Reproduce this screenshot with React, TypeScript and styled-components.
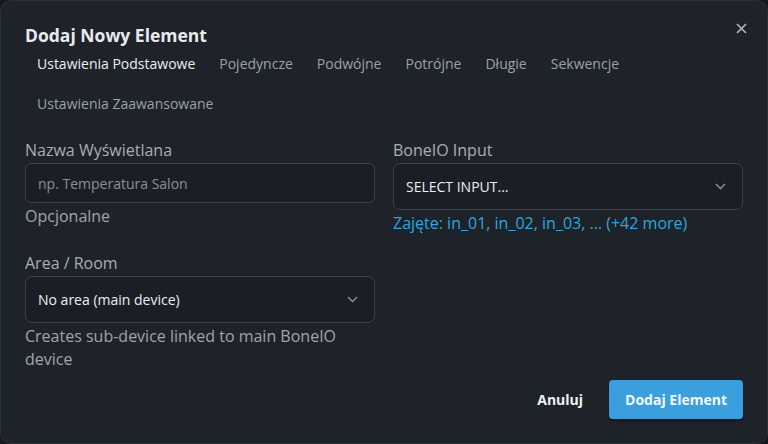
import { FC } from 'react';
import styled, { createGlobalStyle } from 'styled-components';

const GlobalStyle = createGlobalStyle`
  html, body {
    margin: 0;
    padding: 0;
    background: #15181c;
  }
  body {
    font-family: "Open Sans", "Noto Sans", sans-serif;
  }
  * {
    box-sizing: border-box;
  }
`

const Dialog = styled.div`
  width: 768px;
  height: 444px;
  background: #1e232a;
  border-radius: 12px;
  box-shadow: inset 0 0 0 1px #2a3038;
  padding: 20px 25px 25px;
  display: flex;
  flex-direction: column;
  overflow: hidden;
`
const Header = styled.div`
  display: flex;
  justify-content: space-between;
  align-items: flex-start;
`
const Title = styled.h2`
  margin: 3px 0 0;
  font-size: 17.5px;
  font-weight: 700;
  color: #e8eaed;
  line-height: 24px;
`
const CloseButton = styled.button`
  background: none;
  border: none;
  padding: 0;
  margin: -2px -8px 0 0;
  width: 20px;
  height: 20px;
  display: flex;
  align-items: center;
  justify-content: center;
  color: #b4b8bd;
  cursor: pointer;
`
const Tabs = styled.div`
  display: flex;
  flex-wrap: wrap;
  margin-top: -4px;
`
const Tab = styled.div<{ $active?: boolean }>`
  height: 40px;
  padding: 0 12px;
  display: flex;
  align-items: center;
  font-size: 14px;
  color: ${p => (p.$active ? '#eceef0' : '#9ba1a8')};
  white-space: nowrap;
`
const FormGrid = styled.div`
  display: grid;
  grid-template-columns: 1fr 1fr;
  column-gap: 18px;
  margin-top: 16px;
`
const Column = styled.div`
  display: flex;
  flex-direction: column;
  gap: 24px;
`
const Field = styled.div`
  display: flex;
  flex-direction: column;
`
const Label = styled.label`
  font-size: 16px;
  color: #a9aeb3;
  line-height: 22px;
  margin-bottom: 2px;
`
const Input = styled.input`
  height: 40px;
  width: 100%;
  background: #1b1f25;
  border: 1px solid #3b4149;
  border-radius: 6px;
  padding: 0 12px;
  font-family: inherit;
  font-size: 14px;
  color: #e8eaed;
  outline: none;
  &::placeholder {
    color: #8b9096;
  }
`
const Select = styled.div`
  height: 47px;
  background: #1b1f25;
  border: 1px solid #3b4149;
  border-radius: 7px;
  padding: 0 16px 0 12px;
  display: flex;
  align-items: center;
  justify-content: space-between;
  font-size: 14px;
  color: #eceef0;
`
const Hint = styled.div<{ $accent?: boolean }>`
  font-size: 16px;
  line-height: 23px;
  margin-top: 2px;
  color: ${p => (p.$accent ? '#2fa6de' : '#a0a5aa')};
`
const Footer = styled.div`
  margin-top: auto;
  display: flex;
  justify-content: flex-end;
  align-items: center;
  gap: 26px;
`
const TextButton = styled.button`
  background: none;
  border: none;
  padding: 0;
  font-family: inherit;
  font-size: 14px;
  font-weight: 700;
  color: #eef0f2;
  cursor: pointer;
`
const PrimaryButton = styled.button`
  height: 39px;
  padding: 0 16px;
  background: #3a9fdc;
  border: none;
  border-radius: 4px;
  font-family: inherit;
  font-size: 14px;
  font-weight: 700;
  color: #f4f9fd;
  box-shadow: 0 2px 3px rgba(0, 0, 0, 0.35);
  cursor: pointer;
`

const Chevron: FC = () => (
  <svg width="11" height="7" viewBox="0 0 11 7" fill="none">
    <path d="M1 1l4.5 4.5L10 1" stroke="#8d9298" strokeWidth="1.4" />
  </svg>
)

const tabs = ['Ustawienia Podstawowe', 'Pojedyncze', 'Podwójne', 'Potrójne', 'Długie', 'Sekwencje', 'Ustawienia Zaawansowane'];

const App: FC = () => {
  return (
    <>
      <GlobalStyle />
      <Dialog>
        <Header>
          <Title>Dodaj Nowy Element</Title>
          <CloseButton aria-label="close">
            <svg width="11" height="11" viewBox="0 0 11 11">
              <path d="M1 1l9 9M10 1l-9 9" stroke="currentColor" strokeWidth="1.6" />
            </svg>
          </CloseButton>
        </Header>
        <Tabs>
          {tabs.map((t, i) => (
            <Tab key={t} $active={i === 0}>{t}</Tab>
          ))}
        </Tabs>
        <FormGrid>
          <Column>
            <Field>
              <Label>Nazwa Wyświetlana</Label>
              <Input placeholder="np. Temperatura Salon" />
              <Hint>Opcjonalne</Hint>
            </Field>
            <Field>
              <Label>Area / Room</Label>
              <Select>
                No area (main device)
                <Chevron />
              </Select>
              <Hint>Creates sub-device linked to main BoneIO device</Hint>
            </Field>
          </Column>
          <Column>
            <Field>
              <Label>BoneIO Input</Label>
              <Select>
                SELECT INPUT...
                <Chevron />
              </Select>
              <Hint $accent>Zajęte: in_01, in_02, in_03, ... (+42 more)</Hint>
            </Field>
          </Column>
        </FormGrid>
        <Footer>
          <TextButton>Anuluj</TextButton>
          <PrimaryButton>Dodaj Element</PrimaryButton>
        </Footer>
      </Dialog>
    </>
  );
};

export default App;
